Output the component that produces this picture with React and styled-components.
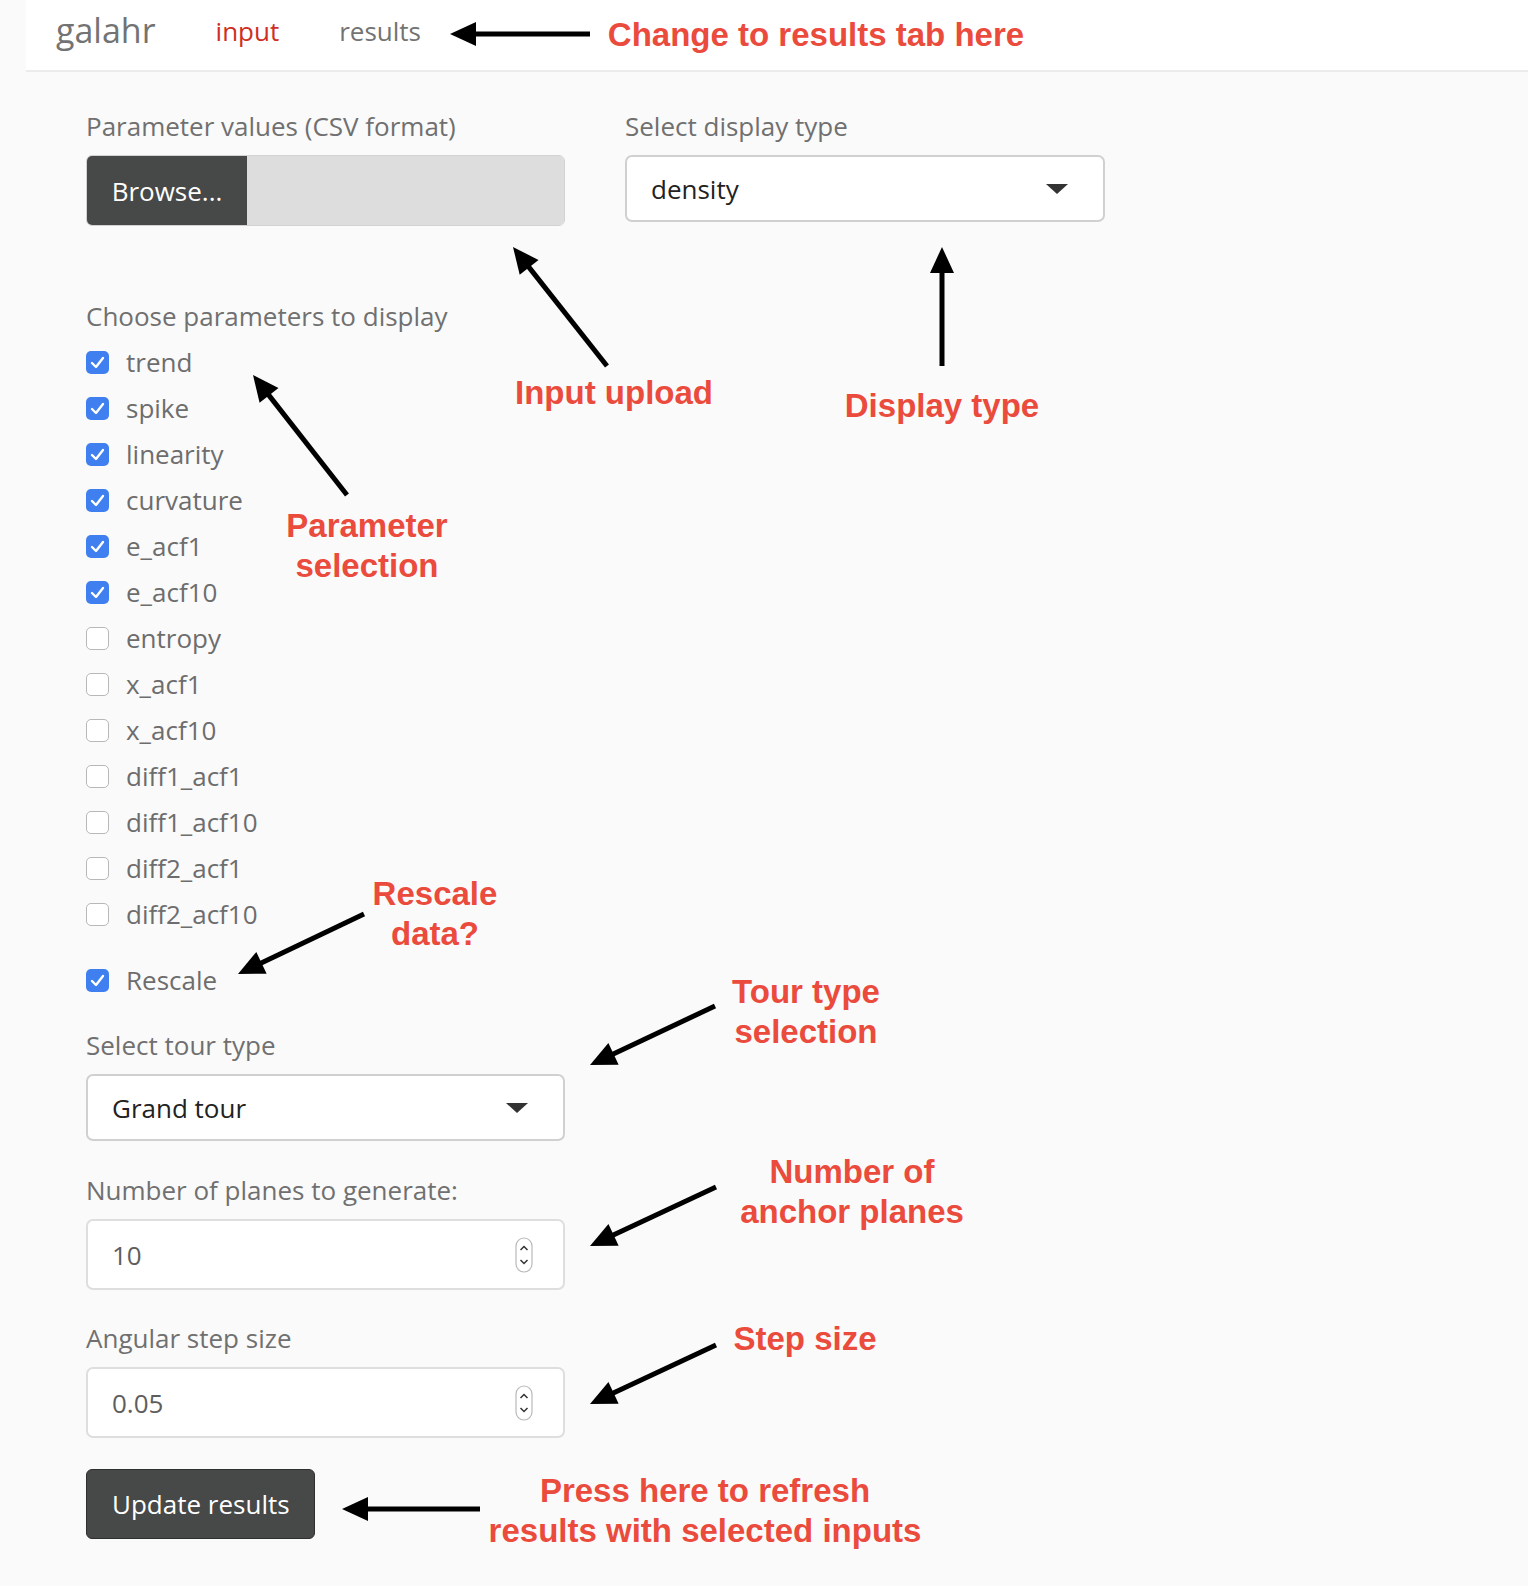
import React from 'react';
import styled, { createGlobalStyle } from 'styled-components';

const GlobalStyle = createGlobalStyle`
  html, body {
    margin: 0;
    padding: 0;
    background: #fafafa;
  }
  body {
    font-family: "Open Sans", "Noto Sans", sans-serif;
  }
`;

const Page = styled.div`
  position: relative;
  width: 1528px;
  min-height: 1586px;
  padding-left: 26px;
  box-sizing: border-box;
  background: #fafafa;
`;

const Navbar = styled.nav`
  height: 72px;
  box-sizing: border-box;
  background: #fff;
  border-bottom: 2px solid #ebebeb;
  display: flex;
  align-items: center;
  padding: 0 0 10px 30px;
`;

const Brand = styled.span`
  font-size: 34px;
  color: #737373;
  margin-right: 60px;
`;

const NavLink = styled.span`
  font-size: 26px;
  padding-top: 2px;
  color: ${p => (p.$active ? '#cf2e24' : '#737373')};
  margin-right: 60px;
`;

const Content = styled.main`
  display: grid;
  grid-template-columns: 479px 480px;
  column-gap: 60px;
  align-items: start;
  padding: 35px 0 0 60px;
`;

const Column = styled.div`
  display: flex;
  flex-direction: column;
`;

const FormGroup = styled.div`
  display: flex;
  flex-direction: column;
  margin-bottom: ${p => p.$gap ?? 30}px;
`;

const Label = styled.label`
  font-size: 26px;
  line-height: 39px;
  color: #707070;
  margin-bottom: ${p => (p.$tight ? 3 : 9)}px;
`;

const FileInput = styled.div`
  display: flex;
  height: 71px;
  border: 1px solid #d2d2d2;
  border-radius: 6px;
  overflow: hidden;
  box-sizing: border-box;
`;

const BrowseButton = styled.span`
  width: 160px;
  background: #474848;
  color: #fff;
  font-size: 26px;
  display: flex;
  align-items: center;
  justify-content: center;
`;

const FileName = styled.div`
  flex: 1;
  background: #dddddd;
`;

const Select = styled.div`
  height: 67px;
  box-sizing: border-box;
  background: #fff;
  border: 2px solid #d0d0d0;
  border-radius: 7px;
  display: flex;
  align-items: center;
  justify-content: space-between;
  padding: 0 35px 0 24px;
  font-size: 26px;
  color: #222;
`;

const Caret = styled.span`
  width: 0;
  height: 0;
  border-left: 11px solid transparent;
  border-right: 11px solid transparent;
  border-top: 10px solid #333;
`;

const NumberField = styled.div`
  height: 71px;
  box-sizing: border-box;
  background: #fff;
  border: 2px solid #dedede;
  border-radius: 7px;
  display: flex;
  align-items: center;
  justify-content: space-between;
  padding: 0 30px 0 24px;
  font-size: 26px;
  color: #5e5e5e;
`;

const CheckRow = styled.label`
  display: flex;
  align-items: center;
  height: 46px;
  font-size: 26px;
  color: #6d6d6d;
  margin-top: ${p => p.$offset || 0}px;
`;

const Box = styled.span`
  width: 23px;
  height: 23px;
  box-sizing: border-box;
  border-radius: 5px;
  margin-right: 17px;
  display: flex;
  align-items: center;
  justify-content: center;
  background: ${p => (p.$checked ? '#3f7fef' : '#fff')};
  border: ${p => (p.$checked ? 'none' : '1.5px solid #b8b8b8')};
`;

const DarkButton = styled.button`
  align-self: flex-start;
  height: 70px;
  width: 229px;
  box-sizing: border-box;
  background: #474848;
  color: #fff;
  border: 1px solid #2f2f2f;
  border-radius: 6px;
  font-family: inherit;
  font-size: 26px;
  text-align: left;
  padding: 0 0 0 25px;
`;

const Overlay = styled.svg`
  position: absolute;
  left: 0;
  top: 0;
  width: 1528px;
  height: 1586px;
  pointer-events: none;
`;

const Note = styled.div`
  position: absolute;
  left: ${p => p.$x}px;
  top: ${p => p.$y}px;
  transform: translate(-50%, -50%);
  font-family: "Liberation Sans", Arial, sans-serif;
  font-weight: 700;
  font-size: 33px;
  line-height: 40px;
  color: #ea4b3c;
  text-align: center;
  white-space: nowrap;
`;

const params = [
  ['trend', true],
  ['spike', true],
  ['linearity', true],
  ['curvature', true],
  ['e_acf1', true],
  ['e_acf10', true],
  ['entropy', false],
  ['x_acf1', false],
  ['x_acf10', false],
  ['diff1_acf1', false],
  ['diff1_acf10', false],
  ['diff2_acf1', false],
  ['diff2_acf10', false],
];

// tail -> tip
const arrows = [
  [590, 34, 450, 34],
  [607, 366, 513, 247],
  [942, 366, 942, 247],
  [347, 495, 253, 375],
  [364, 914, 238, 974],
  [715, 1006, 590, 1065],
  [716, 1187, 590, 1246],
  [716, 1345, 590, 1404],
  [480, 1509, 342, 1509],
];

const notes = [
  { x: 816, y: 35, text: 'Change to results tab here' },
  { x: 614, y: 393, text: 'Input upload' },
  { x: 942, y: 406, text: 'Display type' },
  { x: 367, y: 546, text: 'Parameter\nselection' },
  { x: 435, y: 914, text: 'Rescale\ndata?' },
  { x: 806, y: 1012, text: 'Tour type\nselection' },
  { x: 852, y: 1192, text: 'Number of\nanchor planes' },
  { x: 805, y: 1339, text: 'Step size' },
  { x: 705, y: 1511, text: 'Press here to refresh\nresults with selected inputs' },
];

const Check = () => (
  <svg width="15" height="13" viewBox="0 0 15 13">
    <path d="M2 7 L6 11 L13 2" fill="none" stroke="#fff" strokeWidth="2.4" strokeLinecap="round" strokeLinejoin="round" />
  </svg>
);

const Spinner = () => (
  <svg width="18" height="36" viewBox="0 0 18 36">
    <rect x="1" y="1" width="16" height="34" rx="8" fill="#fff" stroke="#b9b9b9" strokeWidth="1.2" />
    <path d="M5.5 13 L9 9.5 L12.5 13" fill="none" stroke="#333" strokeWidth="1.5" />
    <path d="M5.5 23 L9 26.5 L12.5 23" fill="none" stroke="#333" strokeWidth="1.5" />
  </svg>
);

const Arrow = ({ a }) => {
  const [x1, y1, x2, y2] = a;
  const len = Math.hypot(x2 - x1, y2 - y1);
  const dx = (x2 - x1) / len;
  const dy = (y2 - y1) / len;
  const head = 26;
  const half = 12;
  const bx = x2 - dx * head;
  const by = y2 - dy * head;
  const pts = [
    [x2, y2],
    [bx - dy * half, by + dx * half],
    [bx + dy * half, by - dx * half],
  ]
    .map(p => p.join(','))
    .join(' ');
  return (
    <g>
      <line x1={x1} y1={y1} x2={bx + dx * 2} y2={by + dy * 2} stroke="#000" strokeWidth="5" />
      <polygon points={pts} fill="#000" />
    </g>
  );
};

export default function App() {
  return (
    <Page>
      <GlobalStyle />
      <Navbar>
        <Brand>galahr</Brand>
        <NavLink $active>input</NavLink>
        <NavLink>results</NavLink>
      </Navbar>

      <Content>
        <Column>
          <FormGroup $gap={71}>
            <Label>Parameter values (CSV format)</Label>
            <FileInput>
              <BrowseButton>Browse...</BrowseButton>
              <FileName />
            </FileInput>
          </FormGroup>

          <FormGroup $gap={0}>
            <Label $tight>Choose parameters to display</Label>
            {params.map(([name, on]) => (
              <CheckRow key={name}>
                <Box $checked={on}>{on && <Check />}</Box>
                {name}
              </CheckRow>
            ))}
          </FormGroup>

          <FormGroup $gap={23}>
            <CheckRow $offset={20}>
              <Box $checked>
                <Check />
              </Box>
              Rescale
            </CheckRow>
          </FormGroup>

          <FormGroup $gap={30}>
            <Label>Select tour type</Label>
            <Select>
              Grand tour
              <Caret />
            </Select>
          </FormGroup>

          <FormGroup $gap={29}>
            <Label>Number of planes to generate:</Label>
            <NumberField>
              10
              <Spinner />
            </NumberField>
          </FormGroup>

          <FormGroup $gap={31}>
            <Label>Angular step size</Label>
            <NumberField>
              0.05
              <Spinner />
            </NumberField>
          </FormGroup>

          <DarkButton>Update results</DarkButton>
        </Column>

        <Column>
          <FormGroup>
            <Label>Select display type</Label>
            <Select>
              density
              <Caret />
            </Select>
          </FormGroup>
        </Column>
      </Content>

      <Overlay viewBox="0 0 1528 1586">
        {arrows.map((a, i) => (
          <Arrow key={i} a={a} />
        ))}
      </Overlay>

      {notes.map(n => (
        <Note key={n.text} $x={n.x} $y={n.y}>
          {n.text.split('\n').map(line => (
            <div key={line}>{line}</div>
          ))}
        </Note>
      ))}
    </Page>
  );
}
